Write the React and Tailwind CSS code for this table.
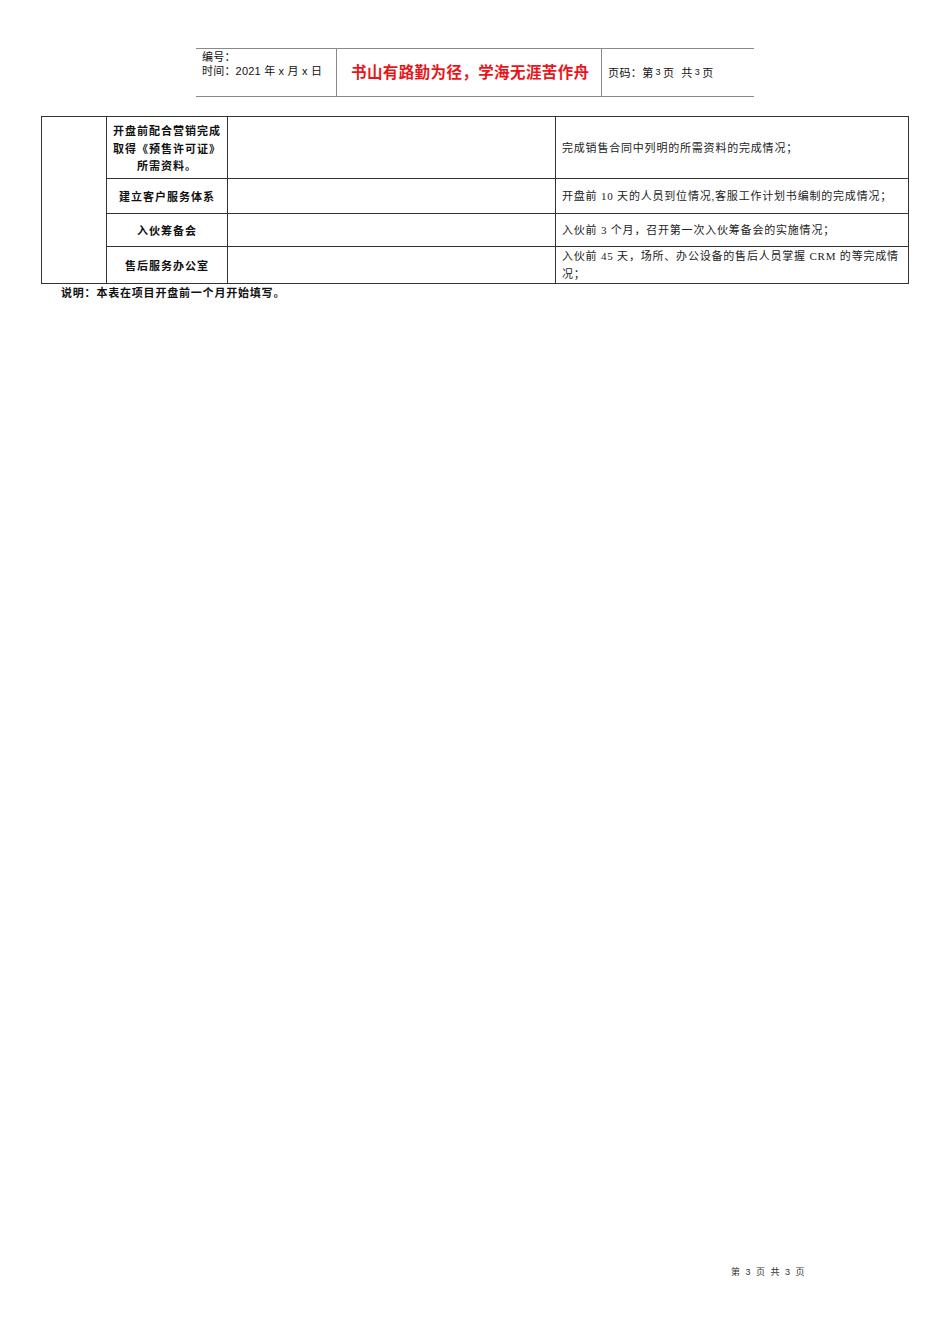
const sans = { fontFamily: '"Liberation Sans", "Noto Sans CJK SC", sans-serif' };

const rows = [
  {
    name: (
      <>
        开盘前配合营销完成
        <br />
        取得《预售许可证》
        <br />
        所需资料。
      </>
    ),
    note: "完成销售合同中列明的所需资料的完成情况；",
    h: "h-[62px]",
  },
  { name: "建立客户服务体系", note: "开盘前 10 天的人员到位情况,客服工作计划书编制的完成情况；", h: "h-[35px]" },
  { name: "入伙筹备会", note: "入伙前 3 个月，召开第一次入伙筹备会的实施情况；", h: "h-[33px]" },
  {
    name: "售后服务办公室",
    note: "入伙前 45 天，场所、办公设备的售后人员掌握 CRM 的等完成情况；",
    h: "h-[36px]",
  },
];

export default function App() {
  return (
    <div className="w-[950px] h-[1344px] bg-white relative text-[#111]" style={sans}>
      {/* page header */}
      <div className="pt-[48px] pl-[196px]">
        <div className="w-[558px] h-[49px] flex border-t border-b border-[#8a8a8a]">
          <div className="w-[141px] border-r border-[#8a8a8a] pl-[6px] pt-[1px] text-[11px] leading-[14px] tracking-[0.2px]">
            <div>编号：</div>
            <div>时间：2021 年 x 月 x 日</div>
          </div>
          <div className="w-[265px] border-r border-[#8a8a8a] flex items-center pl-[14px] pt-[1px] text-[15.5px] font-bold text-[#e8161b] tracking-[0.4px]">
            书山有路勤为径，学海无涯苦作舟
          </div>
          <div className="flex-1 flex items-center pl-[6px] pt-[1px] text-[11px] tracking-[0.4px]">
            页码：第<span className="text-[9px] mx-[2px]">3</span>页&nbsp;&nbsp;共<span className="text-[9px] mx-[2px]">3</span>页
          </div>
        </div>
      </div>

      {/* table */}
      <div className="pl-[41px] pt-[19px]">
        <table className="w-[867px] border-collapse table-fixed">
          <colgroup>
            <col className="w-[65px]" />
            <col className="w-[121px]" />
            <col className="w-[328px]" />
            <col className="w-[353px]" />
          </colgroup>
          <tbody>
            {rows.map((r, i) => (
              <tr key={i} className={r.h}>
                {i === 0 && <td rowSpan={4} className="border border-[#333]"></td>}
                <td className="border border-[#333] text-center text-[11px] font-bold leading-[17.5px] tracking-[1px] px-0 pt-[4px] pb-0">{r.name}</td>
                <td className="border border-[#333]"></td>
                <td
                  className="border border-[#333] pl-[6px] pr-[3px] text-[11px] leading-[18px] tracking-[0.8px] text-[#222] align-middle"
                  style={{ fontFamily: '"Liberation Serif", "Noto Sans CJK SC", serif' }}
                >
                  {r.note}
                </td>
              </tr>
            ))}
          </tbody>
        </table>
        <div className="pl-[20px] pt-[1px] text-[11px] font-bold leading-[16px] tracking-[0.8px]">说明：本表在项目开盘前一个月开始填写。</div>
      </div>

      {/* footer */}
      <div className="absolute left-[731px] top-[1266px] text-[9px] text-[#333] tracking-[1.5px]">第 3 页 共 3 页</div>
    </div>
  );
}
